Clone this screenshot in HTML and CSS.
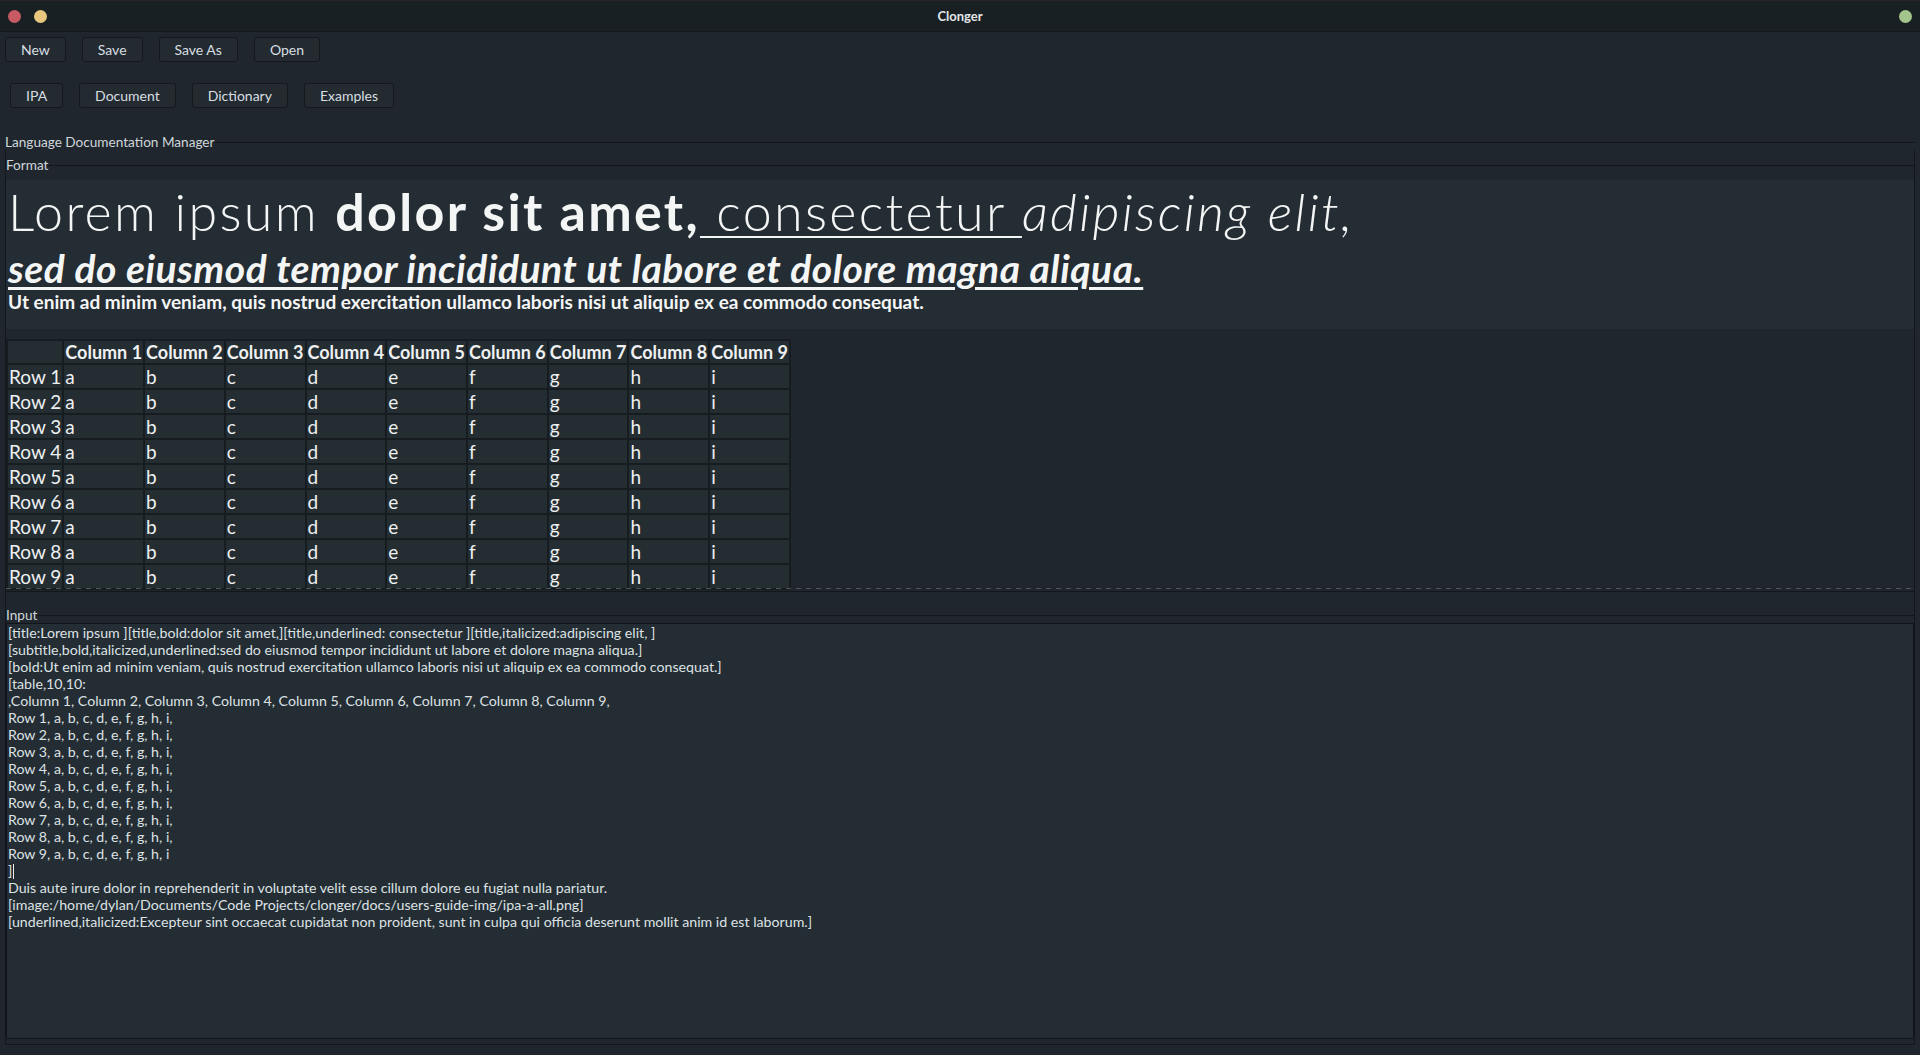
FILE: index.html
```html
<!DOCTYPE html>
<html lang="en">
<head>
<meta charset="utf-8">
<title>Clonger</title>
<link rel="stylesheet" href="styles.css">
</head>
<body>
<div class="titlebar">
  <div class="lights"><span class="dot red"></span><span class="dot yellow"></span></div>
  <div class="wintitle">Clonger</div>
  <div class="lights right"><span class="dot green"></span></div>
</div>
<div class="toolbar first">
  <button class="btn">New</button>
  <button class="btn">Save</button>
  <button class="btn">Save As</button>
  <button class="btn">Open</button>
</div>
<div class="toolbar second">
  <button class="btn">IPA</button>
  <button class="btn">Document</button>
  <button class="btn">Dictionary</button>
  <button class="btn">Examples</button>
</div>
<section class="group">
  <div class="legend outer"><span>Language Documentation Manager</span></div>
  <div class="group-body">
    <div class="legend"><span>Format</span></div>
    <div class="frame">
      <div class="doc">
        <div class="doc-title">Lorem ipsum <b>dolor sit amet,</b><u> consectetur </u><i>adipiscing elit,</i></div>
        <div class="doc-sub">sed do eiusmod tempor incididunt ut labore et dolore magna aliqua.</div>
        <div class="doc-bold">Ut enim ad minim veniam, quis nostrud exercitation ullamco laboris nisi ut aliquip ex ea commodo consequat.</div>
      </div>
      <table class="grid">
        <thead>
          <tr><th></th><th>Column 1</th><th>Column 2</th><th>Column 3</th><th>Column 4</th><th>Column 5</th><th>Column 6</th><th>Column 7</th><th>Column 8</th><th>Column 9</th></tr>
        </thead>
        <tbody>
          <tr><td>Row 1</td><td>a</td><td>b</td><td>c</td><td>d</td><td>e</td><td>f</td><td>g</td><td>h</td><td>i</td></tr>
          <tr><td>Row 2</td><td>a</td><td>b</td><td>c</td><td>d</td><td>e</td><td>f</td><td>g</td><td>h</td><td>i</td></tr>
          <tr><td>Row 3</td><td>a</td><td>b</td><td>c</td><td>d</td><td>e</td><td>f</td><td>g</td><td>h</td><td>i</td></tr>
          <tr><td>Row 4</td><td>a</td><td>b</td><td>c</td><td>d</td><td>e</td><td>f</td><td>g</td><td>h</td><td>i</td></tr>
          <tr><td>Row 5</td><td>a</td><td>b</td><td>c</td><td>d</td><td>e</td><td>f</td><td>g</td><td>h</td><td>i</td></tr>
          <tr><td>Row 6</td><td>a</td><td>b</td><td>c</td><td>d</td><td>e</td><td>f</td><td>g</td><td>h</td><td>i</td></tr>
          <tr><td>Row 7</td><td>a</td><td>b</td><td>c</td><td>d</td><td>e</td><td>f</td><td>g</td><td>h</td><td>i</td></tr>
          <tr><td>Row 8</td><td>a</td><td>b</td><td>c</td><td>d</td><td>e</td><td>f</td><td>g</td><td>h</td><td>i</td></tr>
          <tr><td>Row 9</td><td>a</td><td>b</td><td>c</td><td>d</td><td>e</td><td>f</td><td>g</td><td>h</td><td>i</td></tr>
        </tbody>
      </table>
      <div class="dash"></div>
    </div>
    <div class="legend input-legend"><span>Input</span></div>
    <div class="input-area">
<div class="line">[title:Lorem ipsum ][title,bold:dolor sit amet,][title,underlined: consectetur ][title,italicized:adipiscing elit, ]</div>
<div class="line">[subtitle,bold,italicized,underlined:sed do eiusmod tempor incididunt ut labore et dolore magna aliqua.]</div>
<div class="line">[bold:Ut enim ad minim veniam, quis nostrud exercitation ullamco laboris nisi ut aliquip ex ea commodo consequat.]</div>
<div class="line">[table,10,10:</div>
<div class="line">,Column 1, Column 2, Column 3, Column 4, Column 5, Column 6, Column 7, Column 8, Column 9,</div>
<div class="line">Row 1, a, b, c, d, e, f, g, h, i,</div>
<div class="line">Row 2, a, b, c, d, e, f, g, h, i,</div>
<div class="line">Row 3, a, b, c, d, e, f, g, h, i,</div>
<div class="line">Row 4, a, b, c, d, e, f, g, h, i,</div>
<div class="line">Row 5, a, b, c, d, e, f, g, h, i,</div>
<div class="line">Row 6, a, b, c, d, e, f, g, h, i,</div>
<div class="line">Row 7, a, b, c, d, e, f, g, h, i,</div>
<div class="line">Row 8, a, b, c, d, e, f, g, h, i,</div>
<div class="line">Row 9, a, b, c, d, e, f, g, h, i</div>
<div class="line">]<span class="caret"></span></div>
<div class="line">Duis aute irure dolor in reprehenderit in voluptate velit esse cillum dolore eu fugiat nulla pariatur.</div>
<div class="line">[image:/home/dylan/Documents/Code Projects/clonger/docs/users-guide-img/ipa-a-all.png]</div>
<div class="line">[underlined,italicized:Excepteur sint occaecat cupidatat non proident, sunt in culpa qui officia deserunt mollit anim id est laborum.]</div>
    </div>
  </div>
</section>
</body>
</html>
```

FILE: styles.css
```css
* { box-sizing: border-box; }
html, body { margin: 0; padding: 0; }
body {
  width: 1920px;
  height: 1055px;
  overflow: hidden;
  background: #1f262d;
  color: #d8dee2;
  font-family: "Lato", "Open Sans", "DejaVu Sans", sans-serif;
}

/* title bar */
.titlebar {
  height: 32px;
  background: #192024;
  border-top: 1px solid #2a2224;
  border-bottom: 1px solid #141a1d;
  display: grid;
  grid-template-columns: 1fr auto 1fr;
  align-items: center;
}
.lights { display: flex; gap: 13px; padding-left: 8px; align-items: center; }
.lights.right { justify-content: flex-end; padding-left: 0; padding-right: 8px; }
.dot { width: 13px; height: 13px; border-radius: 50%; display: block; }
.red { background: #c75a63; }
.yellow { background: #e8c67d; }
.green { background: #a3c48a; }
.wintitle { font-weight: 700; font-size: 13px; color: #e2e6e8; }

/* toolbars */
.toolbar { display: flex; gap: 16px; }
.toolbar.first { margin-top: 5px; padding-left: 5px; }
.toolbar.second { margin-top: 21px; padding-left: 10px; }
.btn {
  height: 25px;
  padding: 0 15px;
  background: #232b31;
  border: 1px solid #12181c;
  border-radius: 3px;
  color: #d8dee2;
  font-family: inherit;
  font-size: 14px;
  line-height: 23px;
}

/* group box */
.group { margin: 26px 5px 0 5px; }
.legend {
  height: 16px;
  display: flex;
  align-items: center;
  font-size: 13.6px;
  color: #d0d6da;
  line-height: 16px;
}
.legend::after {
  content: "";
  flex: 1;
  height: 1px;
  background: #12171b;
  margin-top: 1px;
}
.group-body {
  height: 895px;
  border: 1px solid #12171b;
  border-top: none;
  padding-top: 7px;
}
.frame {
  padding-top: 7px;
  border-bottom: 1px solid #12171b;
  padding-bottom: 2px;
}

.doc {
  height: 149px;
  background: #242d33;
  color: #f4f5f5;
  padding: 0 0 0 2px;
  margin-bottom: 10px;
}
.doc-title {
  font-size: 52px;
  line-height: 62px;
  font-weight: 300;
  letter-spacing: 2.3px;
  white-space: pre;
}
.doc-title b { font-weight: 700; }
.doc-title i { font-style: italic; font-weight: 300; }
.doc-title u { text-decoration-thickness: 2px; text-underline-offset: 5px; }
.doc-sub {
  margin-top: 5px;
  font-size: 39px;
  line-height: 43px;
  font-weight: 700;
  font-style: italic;
  letter-spacing: 0.5px;
  text-decoration: underline;
  text-decoration-thickness: 3px;
  text-underline-offset: 4px;
}
.doc-bold {
  font-size: 19px;
  line-height: 23px;
  font-weight: 700;
}

.grid {
  border-collapse: separate;
  border-spacing: 2px;
  background: #161c20;
  font-size: 18px;
  color: #eef0f1;
}
.grid th, .grid td {
  background: #242d32;
  padding: 0 1px;
  text-align: left;
  white-space: nowrap;
}
.grid th { height: 22px; line-height: 22px; font-weight: 700; }
.grid td { height: 23px; line-height: 23px; font-weight: 400; font-size: 19px; }

.dash {
  height: 1px;
  margin-top: -2px;
  background: repeating-linear-gradient(90deg, #50585e 0 5px, transparent 5px 10px);
}

.input-legend { margin-top: 15px; }
.input-area {
  height: 416px;
  background: #242d33;
  border: 1px solid #11161a;
  padding: 0 0 0 1px;
  color: #dde2e5;
  font-size: 14.2px;
}
.line { line-height: 17px; height: 17px; white-space: pre; }
.caret {
  display: inline-block;
  width: 1px;
  height: 15px;
  background: #e8ecee;
  vertical-align: -3px;
  margin-left: 1px;
}
```
